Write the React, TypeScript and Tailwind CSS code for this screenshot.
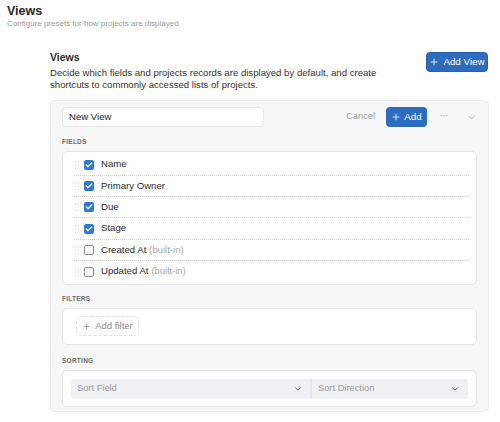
import { Plus, ChevronDown, Check } from "lucide-react";

const FIELDS = [
  { name: "Name", checked: true },
  { name: "Primary Owner", checked: true },
  { name: "Due", checked: true },
  { name: "Stage", checked: true },
  { name: "Created At", checked: false, builtIn: true },
  { name: "Updated At", checked: false, builtIn: true },
];

function DragHandle() {
  return (
    <svg width="4" height="8" viewBox="0 0 4 8" className="shrink-0">
      {[0.7, 4, 7.3].map((y) => (
        <g key={y}>
          <circle cx="0.7" cy={y} r="0.6" fill="#c9c9c9" />
          <circle cx="3.3" cy={y} r="0.6" fill="#c9c9c9" />
        </g>
      ))}
    </svg>
  );
}

function Checkbox({ checked }: { checked: boolean }) {
  if (checked) {
    return (
      <div className="w-[10px] h-[10px] rounded-[2px] bg-[#2a79e0] flex items-center justify-center shrink-0">
        <Check className="w-[8px] h-[8px] text-white" strokeWidth={4} />
      </div>
    );
  }
  return <div className="w-[10px] h-[10px] rounded-[2px] border border-[#8a8a8a] bg-white shrink-0" />;
}

function SectionLabel({ children }: { children: string }) {
  return (
    <div className="text-[6.5px] font-bold tracking-[0.04em] text-[#6f6f6f] leading-none uppercase">
      {children}
    </div>
  );
}

export default function App() {
  return (
    <div
      className="w-[500px] h-[422px] bg-white overflow-hidden text-[#2b2b2b]"
      style={{ fontFamily: '"Liberation Sans", Arial, sans-serif' }}
    >
      {/* Page header */}
      <div className="pl-[7px] pt-[4px]">
        <div className="text-[12.5px] font-bold leading-[14px] text-[#2a2a2a]">Views</div>
        <div className="text-[8px] leading-[10px] text-[#9a9a9a] mt-[1px]">
          Configure presets for how projects are displayed
        </div>
      </div>

      <div className="ml-[50px] mr-[12px] mt-[22px]">
        {/* Section header */}
        <div className="flex justify-between items-start">
          <div>
            <div className="text-[10.5px] font-bold leading-[12px] text-[#2a2a2a]">Views</div>
            <div className="text-[9.6px] leading-[12px] text-[#333] mt-[4px] w-[340px]">
              Decide which fields and projects records are displayed by default, and create
              shortcuts to commonly accessed lists of projects.
            </div>
          </div>
          <button className="mt-[1px] h-[20px] w-[62px] rounded-[4px] bg-[#2d6dbf] border border-[#275fa8] text-white text-[9.8px] flex items-center justify-center gap-[4px]">
            <Plus className="w-[10px] h-[10px]" strokeWidth={2} />
            Add View
          </button>
        </div>

        {/* Card */}
        <div className="mt-[9px] w-[439px] h-[312px] rounded-[5px] border border-[#ebebeb] bg-[#f7f7f7] px-[11px] pt-[6px]">
          <div className="flex items-center h-[20px]">
            <div className="w-[202px] h-[20px] rounded-[4px] border border-[#e6e6e6] bg-white flex items-center px-[6px] text-[9.6px] text-[#222]">
              New View
            </div>
            <div className="flex-1" />
            <span className="text-[9.3px] text-[#a0a0a0]">Cancel</span>
            <button className="ml-[11px] h-[20px] w-[41px] rounded-[4px] bg-[#2d6dbf] text-white text-[9.8px] flex items-center justify-center gap-[3px]">
              <Plus className="w-[10px] h-[10px]" strokeWidth={2} />
              Add
            </button>
            <span className="ml-[11px] w-[12px] text-center text-[9px] text-[#888] leading-none -mt-[3px]">
              ···
            </span>
            <ChevronDown className="ml-[16px] w-[11px] h-[11px] text-[#999]" strokeWidth={1.5} />
          </div>

          <div className="mt-[12px]">
            <SectionLabel>Fields</SectionLabel>
          </div>
          <div className="mt-[5px] rounded-[5px] border border-[#e6e6e6] bg-white pt-[3px] pb-[2px]">
            {FIELDS.map((f, i) => (
              <div
                key={f.name}
                className={`ml-[11px] mr-[7px] h-[21.3px] flex items-center ${
                  i < FIELDS.length - 1 ? "border-b border-dotted border-[#d4d4d4]" : ""
                }`}
              >
                <div className="w-[10px] flex items-center justify-start pl-[1px]">
                  <DragHandle />
                </div>
                <Checkbox checked={f.checked} />
                <span className="ml-[7px] text-[9.6px] text-[#2a2a2a]">
                  {f.name}
                  {f.builtIn && <span className="text-[#a8a8a8]"> (built-in)</span>}
                </span>
              </div>
            ))}
          </div>

          <div className="mt-[11px]">
            <SectionLabel>Filters</SectionLabel>
          </div>
          <div className="mt-[5px] h-[37px] rounded-[5px] border border-[#e6e6e6] bg-white flex items-center px-[13px]">
            <button className="h-[20px] w-[63px] rounded-[5px] border border-dashed border-[#e0e0e0] flex items-center justify-center gap-[4px] text-[9.5px] text-[#8a8a8a]">
              <Plus className="w-[9px] h-[9px] text-[#777]" strokeWidth={1.8} />
              Add filter
            </button>
          </div>

          <div className="mt-[13px]">
            <SectionLabel>Sorting</SectionLabel>
          </div>
          <div className="mt-[6px] h-[37px] rounded-[5px] border border-[#e6e6e6] bg-white flex items-center pl-[8px] pr-[8px]">
            <div className="flex w-full h-[20px] bg-[#eff1f4] rounded-[3px]">
              <div className="w-[241px] flex items-center justify-between pl-[6px] pr-[7px] border-r-2 border-[#e3e5e8]">
                <span className="text-[9.3px] text-[#999]">Sort Field</span>
                <ChevronDown className="w-[10px] h-[10px] text-[#444]" strokeWidth={2} />
              </div>
              <div className="flex-1 flex items-center justify-between pl-[6px] pr-[8px]">
                <span className="text-[9.3px] text-[#999]">Sort Direction</span>
                <ChevronDown className="w-[10px] h-[10px] text-[#444]" strokeWidth={2} />
              </div>
            </div>
          </div>
        </div>
      </div>
    </div>
  );
}
